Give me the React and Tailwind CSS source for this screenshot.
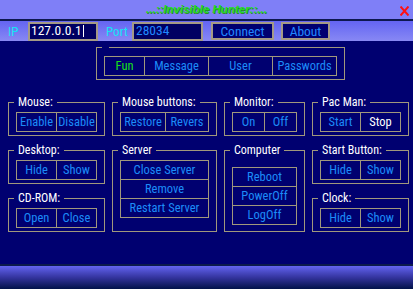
import React from "react";

function Group({ title, children, pt = "pt-[2px]" }) {
  return (
    <fieldset className={`border border-[#a0987c] px-[7px] pb-[3px] ${pt} min-w-0`}>
      <legend className="ml-[-2px] px-[4px] text-white text-[12px] leading-[15px]">{title}</legend>
      {children}
    </fieldset>
  );
}

function Pair({ a, b, aw = "w-[39px]", bText = "text-[#1c8cf8]" }) {
  return (
    <div className="flex h-[20px] border border-[#a0987c]">
      <div className={`${aw} flex items-center justify-center text-[#1c8cf8] pt-[1px]`}>{a}</div>
      <div className={`flex-1 border-l border-[#a0987c] flex items-center justify-center pt-[1px] ${bText}`}>{b}</div>
    </div>
  );
}

function Stack({ items }) {
  return (
    <div className="flex flex-col border border-[#a0987c]">
      {items.map((t, i) => (
        <div
          key={t}
          className={`flex items-center justify-center text-[#1c8cf8] pt-[1px] ${i > 0 ? "border-t border-[#a0987c] h-[19px]" : "h-[18px]"}`}
        >
          {t}
        </div>
      ))}
    </div>
  );
}

export default function App() {
  return (
    <div className="w-[413px] h-[289px] flex flex-col overflow-hidden font-['Roboto',sans-serif] [font-stretch:84%] text-[12.5px] leading-none select-none">
      {/* Title bar */}
      <div className="h-[19px] bg-[#7f7ff7] flex items-center relative">
        <div className="flex-1 text-center pt-[1px] font-['Liberation_Sans',Arial,sans-serif] [font-stretch:normal] font-bold italic text-[11.5px] text-[#22dd22] [text-shadow:1px_1px_0_#2a8a2a]">
          ...::Invisible Hunter::...
        </div>
        <svg className="absolute left-[400px] top-[6px]" width="9" height="10" viewBox="0 0 9 10">
          <path d="M0.5 0.5 L8.5 9.5 M8.5 0.5 L0.5 9.5" stroke="#ff1010" strokeWidth="2" fill="none" />
        </svg>
      </div>
      <div className="h-[2px] bg-[#0d1850]" />
      {/* Toolbar */}
      <div className="h-[20px] bg-gradient-to-b from-[#6464f2] to-[#8888f4] flex items-center">
        <div className="ml-[8px] w-[20px] text-[#14e4f4] text-[13px]">IP</div>
        <div className="w-[70px] h-[19px] border-2 border-[#a49a86] bg-[#000062] flex items-center pl-[1px] text-white text-[13.5px]">
          127.0.0.1<span className="inline-block w-[1px] h-[12px] bg-white ml-[1px]" />
        </div>
        <div className="ml-[8px] w-[26px] text-[#14e4f4] text-[13px]">Port</div>
        <div className="w-[71px] h-[19px] border-2 border-[#a49a86] bg-[#000062] flex items-center pl-[2px] text-[#2088ff] text-[13.5px]">
          28034
        </div>
        <div className="ml-[8px] w-[63px] h-[18px] border-2 border-[#a49a86] bg-[#000070] flex items-center justify-center pt-[1px] text-[#2088ff] text-[13.5px]">
          Connect
        </div>
        <div className="ml-[7px] w-[49px] h-[18px] border-2 border-[#a49a86] bg-[#000070] flex items-center justify-center pt-[1px] text-[#2088ff] text-[13.5px]">
          About
        </div>
      </div>
      {/* Main */}
      <div className="flex-1 bg-[#000070] flex flex-col">
        <fieldset className="ml-[96px] mt-[1px] w-[249px] border border-[#a0987c] px-[7px] pt-[3px] pb-[3px]">
          <legend className="ml-[-2px] w-[7px] h-[11px] p-0" />
          <div className="flex h-[20px] border border-[#a0987c]">
            <div className="w-[39px] flex items-center justify-center pt-[1px] text-[#18e018]">Fun</div>
            <div className="w-[64px] border-l border-[#a0987c] flex items-center justify-center pt-[1px] text-[#1c8cf8]">Message</div>
            <div className="w-[64px] border-l border-[#a0987c] flex items-center justify-center pt-[1px] text-[#1c8cf8]">User</div>
            <div className="flex-1 border-l border-[#a0987c] flex items-center justify-center pt-[1px] text-[#1c8cf8]">Passwords</div>
          </div>
        </fieldset>

        <div className="ml-[8px] mt-[15px] grid grid-cols-[97px_105px_81px_97px] gap-[7px]">
          <Group title="Mouse:">
            <Pair a="Enable" b="Disable" />
          </Group>
          <Group title="Mouse buttons:">
            <Pair a="Restore" b="Revers" aw="w-[44px]" />
          </Group>
          <Group title="Monitor:">
            <Pair a="On" b="Off" aw="w-[31px]" />
          </Group>
          <Group title="Pac Man:">
            <Pair a="Start" b="Stop" bText="text-white" />
          </Group>

          <div className="flex flex-col gap-[7px]">
            <Group title="Desktop:">
              <Pair a="Hide" b="Show" />
            </Group>
            <Group title="CD-ROM:">
              <Pair a="Open" b="Close" />
            </Group>
          </div>
          <Group title="Server">
            <Stack items={["Close Server", "Remove", "Restart Server"]} />
          </Group>
          <Group title="Computer" pt="pt-[9px]">
            <Stack items={["Reboot", "PowerOff", "LogOff"]} />
          </Group>
          <div className="flex flex-col gap-[7px]">
            <Group title="Start Button:">
              <Pair a="Hide" b="Show" />
            </Group>
            <Group title="Clock:">
              <Pair a="Hide" b="Show" />
            </Group>
          </div>
        </div>
      </div>
      <div className="h-[2px] bg-[#0c1a4e]" />
      <div className="h-[23px] bg-gradient-to-b from-[#6464f2] via-[#34349e] to-[#02124a]" />
    </div>
  );
}
